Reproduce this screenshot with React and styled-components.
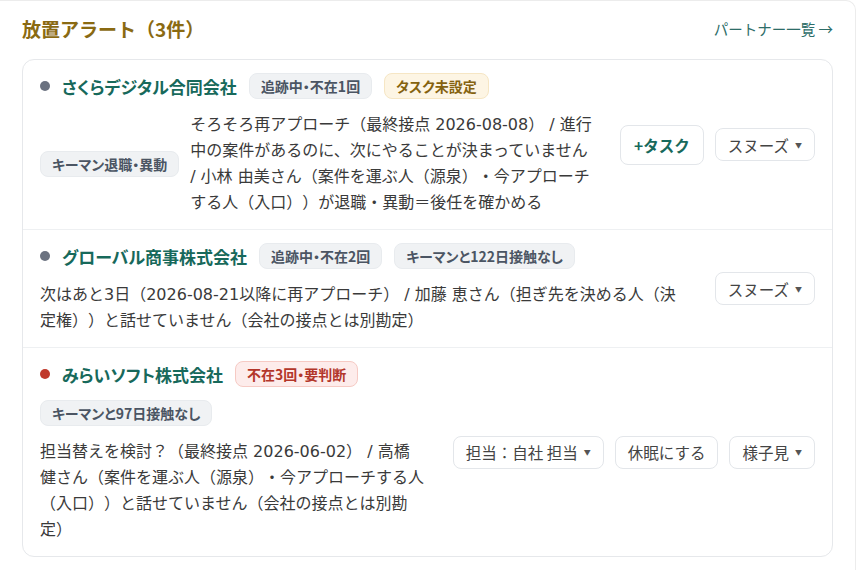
import React from 'react';
import styled, { createGlobalStyle, css } from 'styled-components';

const GlobalStyle = createGlobalStyle`
  html, body {
    margin: 0;
    background: #ffffff;
  }
  body {
    font-family: "Noto Sans CJK JP", "Noto Sans", sans-serif;
    color: #333;
  }
`;

// 括弧が続いても詰めずに全角のまま並べる
const fullWidth = css`
  text-spacing-trim: space-all;
`;

const Frame = styled.section`
  width: 856px;
  min-height: 570px;
  box-sizing: border-box;
  border-top: 1px solid #ececec;
  border-right: 1px solid #ececec;
  border-top-right-radius: 10px;
  padding: 13px 22px 14px 22px;
`;

const Header = styled.header`
  display: flex;
  align-items: center;
  justify-content: space-between;
  height: 28px;
  margin-bottom: 17px;
`;

const Title = styled.h2`
  margin: 0;
  font-size: 19px;
  font-weight: 700;
  color: #8a6a12;
  ${fullWidth}
`;

const ListLink = styled.a`
  font-size: 14.5px;
  color: #2d6d68;
  text-decoration: none;
  cursor: pointer;
`;

const Card = styled.div`
  border: 1px solid #e6e8eb;
  border-radius: 12px;
  overflow: hidden;
`;

const Row = styled.div`
  display: flex;
  align-items: center;
  gap: 26px;
  padding: 13px 17px;
  & + & {
    border-top: 1px solid #eef0f2;
  }
`;

const Main = styled.div`
  flex: 1;
  min-width: 0;
  display: flex;
  flex-direction: column;
  gap: 13px;
`;

const RowHead = styled.div`
  display: flex;
  align-items: center;
  gap: 12px;
`;

const Dot = styled.span`
  width: 10px;
  height: 10px;
  border-radius: 50%;
  flex-shrink: 0;
  background: ${p => (p.$alert ? '#c0392b' : '#6b7280')};
`;

const Name = styled.span`
  font-size: 17px;
  font-weight: 700;
  color: #17695b;
  font-feature-settings: "palt";
`;

const tones = {
  gray: css`
    background: #f0f2f4;
    border-color: #e8ebee;
    color: #4b5563;
  `,
  amber: css`
    background: #fdf5e4;
    border-color: #f6e6c4;
    color: #85620f;
  `,
  red: css`
    background: #fdeceb;
    border-color: #f6cac4;
    color: #b3362a;
  `,
};

const Badge = styled.span`
  display: inline-flex;
  align-items: center;
  height: 26px;
  box-sizing: border-box;
  padding: 0 11px;
  border: 1px solid transparent;
  border-radius: 8px;
  font-size: 14px;
  font-weight: 600;
  font-feature-settings: "palt";
  white-space: nowrap;
  flex-shrink: 0;
  align-self: ${p => (p.$start ? 'flex-start' : 'auto')};
  ${p => tones[p.$tone || 'gray']}
`;

const Detail = styled.div`
  display: flex;
  align-items: center;
  gap: 11px;
`;

const Text = styled.p`
  margin: 0;
  flex: 1;
  font-family: "DejaVu Sans", "Noto Sans CJK JP", sans-serif;
  font-size: 16px;
  line-height: 26px;
  color: #3a3a3a;
  ${fullWidth}
`;

const Actions = styled.div`
  display: flex;
  align-items: center;
  gap: 11px;
  flex-shrink: 0;
`;

const Button = styled.button`
  display: inline-flex;
  align-items: center;
  gap: 6px;
  height: ${p => (p.$primary ? '40px' : '33px')};
  padding: 0 ${p => (p.$primary ? '13px' : '12px')};
  background: #fff;
  border: 1px solid #e3e6ea;
  border-radius: 8px;
  font-family: inherit;
  font-size: 15.5px;
  font-weight: ${p => (p.$primary ? 700 : 400)};
  color: ${p => (p.$primary ? '#17695b' : '#444')};
  ${fullWidth}
  cursor: pointer;
`;

const Caret = styled.span`
  font-size: 7px;
  color: #555;
`;

const alerts = [
  {
    name: 'さくらデジタル合同会社',
    badges: [
      { label: '追跡中・不在1回', tone: 'gray' },
      { label: 'タスク未設定', tone: 'amber' },
    ],
    sideTag: 'キーマン退職・異動',
    text: 'そろそろ再アプローチ（最終接点 2026-08-08） / 進行中の案件があるのに、次にやることが決まっていません / 小林 由美さん（案件を運ぶ人（源泉）・今アプローチする人（入口））が退職・異動＝後任を確かめる',
    actions: [
      { label: '+タスク', primary: true },
      { label: 'スヌーズ', caret: true },
    ],
  },
  {
    name: 'グローバル商事株式会社',
    badges: [
      { label: '追跡中・不在2回', tone: 'gray' },
      { label: 'キーマンと122日接触なし', tone: 'gray' },
    ],
    text: '次はあと3日（2026-08-21以降に再アプローチ） / 加藤 恵さん（担ぎ先を決める人（決定権））と話せていません（会社の接点とは別勘定）',
    actions: [{ label: 'スヌーズ', caret: true }],
  },
  {
    name: 'みらいソフト株式会社',
    alert: true,
    badges: [{ label: '不在3回・要判断', tone: 'red' }],
    topTag: 'キーマンと97日接触なし',
    text: '担当替えを検討？（最終接点 2026-06-02） / 高橋 健さん（案件を運ぶ人（源泉）・今アプローチする人（入口））と話せていません（会社の接点とは別勘定）',
    actions: [
      { label: '担当：自社 担当', caret: true },
      { label: '休眠にする' },
      { label: '様子見', caret: true },
    ],
  },
];

const AlertRow = ({ item }) => (
  <Row>
    <Main>
      <RowHead>
        <Dot $alert={item.alert} />
        <Name>{item.name}</Name>
        {item.badges.map(b => (
          <Badge key={b.label} $tone={b.tone}>{b.label}</Badge>
        ))}
      </RowHead>
      {item.topTag && <Badge $start>{item.topTag}</Badge>}
      {item.sideTag ? (
        <Detail>
          <Badge>{item.sideTag}</Badge>
          <Text>{item.text}</Text>
        </Detail>
      ) : (
        <Text>{item.text}</Text>
      )}
    </Main>
    <Actions>
      {item.actions.map(a => (
        <Button key={a.label} $primary={a.primary}>
          {a.label}
          {a.caret && <Caret>▼</Caret>}
        </Button>
      ))}
    </Actions>
  </Row>
);

export default function App() {
  return (
    <>
      <GlobalStyle />
      <Frame>
        <Header>
          <Title>放置アラート（3件）</Title>
          <ListLink>パートナー一覧 →</ListLink>
        </Header>
        <Card>
          {alerts.map(item => (
            <AlertRow key={item.name} item={item} />
          ))}
        </Card>
      </Frame>
    </>
  );
}
